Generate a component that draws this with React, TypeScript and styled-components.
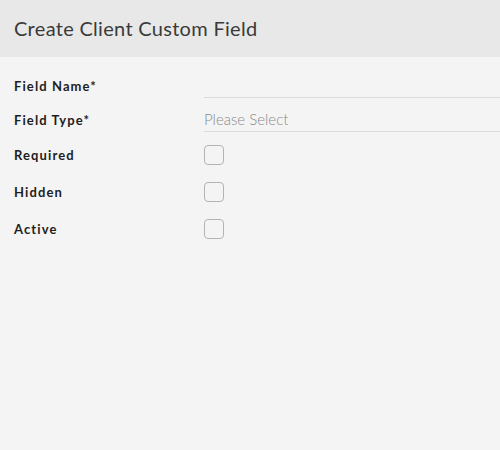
import React from "react";
import styled, { createGlobalStyle } from "styled-components";

const GlobalStyle = createGlobalStyle`
  html, body {
    margin: 0;
    padding: 0;
    background: #f4f4f4;
  }
  body {
    font-family: Lato, "Noto Sans", sans-serif;
  }
`;

const App = () => {
  return (
    <Page>
      <GlobalStyle />
      <Header>
        <Title>Create Client Custom Field</Title>
      </Header>
      <Form>
        <Row $top={0}>
          <Label>Field Name*</Label>
          <TextInput type="text" />
        </Row>
        <Row $top={9}>
          <Label>Field Type*</Label>
          <Select>Please Select</Select>
        </Row>
        <Row $top={13}>
          <Label>Required</Label>
          <Checkbox type="checkbox" />
        </Row>
        <Row $top={17}>
          <Label>Hidden</Label>
          <Checkbox type="checkbox" />
        </Row>
        <Row $top={17}>
          <Label>Active</Label>
          <Checkbox type="checkbox" />
        </Row>
      </Form>
    </Page>
  );
};

export default App;

const Page = styled.div`
  width: 100%;
  min-height: 450px;
  background: #f4f4f4;
`;

const Header = styled.header`
  height: 57px;
  background: #e8e8e8;
  display: flex;
  align-items: center;
  padding: 0 14px;
  box-sizing: border-box;
`;

const Title = styled.h1`
  margin: 0;
  font-size: 20px;
  font-weight: 400;
  color: #3a3a3a;
  letter-spacing: 0.3px;
  padding-bottom: 2px;
`;

const Form = styled.form`
  display: flex;
  flex-direction: column;
  padding: 16px 0 0 14px;
`;

const Row = styled.div<{ $top: number }>`
  display: grid;
  grid-template-columns: 190px 1fr;
  align-items: center;
  margin-top: ${(p) => p.$top}px;
`;

const Label = styled.label`
  font-size: 13px;
  font-weight: 700;
  color: #1e1e1e;
  letter-spacing: 1.1px;
`;

const TextInput = styled.input`
  height: 25px;
  box-sizing: border-box;
  border: none;
  border-bottom: 1px solid #dcdcdc;
  background: transparent;
  padding: 0;
  outline: none;
`;

const Select = styled.div`
  height: 25px;
  box-sizing: border-box;
  border-bottom: 1px solid #dcdcdc;
  font-size: 15px;
  font-weight: 300;
  color: #8a8a8a;
  display: flex;
  align-items: center;
`;

const Checkbox = styled.input`
  appearance: none;
  margin: 0;
  width: 20px;
  height: 20px;
  box-sizing: border-box;
  border: 1.5px solid #b4b4b4;
  border-radius: 4px;
  background: #f4f4f4;
`;
